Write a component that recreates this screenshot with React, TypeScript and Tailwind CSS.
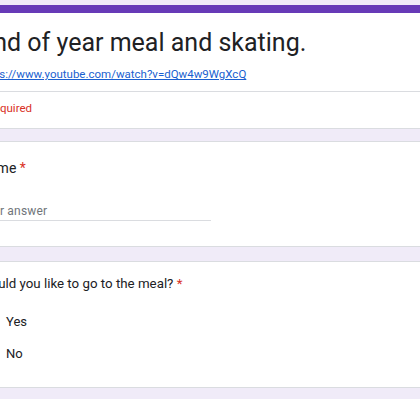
import React from 'react';

const font = { fontFamily: 'Roboto, "Noto Sans", Arial, sans-serif' };

function Required() {
  return <span className="text-[#d93025]"> *</span>;
}

export default function App() {
  return (
    <div className="w-[420px] h-[420px] overflow-hidden bg-[#f0ebf8]" style={font}>
      <div className="ml-[-46px] w-[520px] pt-[5px] flex flex-col">
        {/* header card */}
        <div className="rounded-lg overflow-hidden border border-[#dadce0] border-t-0 bg-white">
          <div className="h-[8px] bg-[#673ab7]" />
          <div className="px-6 pt-[12px] pb-[9px]">
            <div className="text-[25px] leading-[36px] text-[#202124]">End of year meal and skating.</div>
            <a className="block mt-[5px] text-[11.5px] leading-[16px] text-[#1a5fd0] underline">
              https://www.youtube.com/watch?v=dQw4w9WgXcQ
            </a>
          </div>
          <div className="border-t border-[#dadce0] px-6 pt-[8px] pb-[12px]">
            <div className="text-[11.5px] leading-[16px] text-[#d93025]">* Required</div>
          </div>
        </div>

        {/* name */}
        <div className="mt-[12px] rounded-lg border border-[#dadce0] bg-white px-6 pt-[16px] pb-[25px]">
          <div className="text-[14px] leading-[20px] text-[#202124]">
            Name<Required />
          </div>
          <div className="mt-[25px] w-[232px] border-b border-[#dadce0] pb-[1px] text-[12px] leading-[16px] text-[#70757a] tracking-[0.2px]">
            Your answer
          </div>
        </div>

        {/* meal */}
        <div className="mt-[14px] rounded-lg border border-[#dadce0] bg-white px-6 pt-[12px] pb-[23px]">
          <div className="text-[13.3px] leading-[20px] text-[#202124]">
            Would you like to go to the meal?<Required />
          </div>
          <div className="mt-[18px] flex flex-col gap-[12px]">
            {['Yes', 'No'].map((opt) => (
              <div key={opt} className="flex items-center gap-[7px] text-[13px] leading-[20px] text-[#202124]">
                <span className="w-5 h-5 rounded-full border-2 border-[#5f6368]" />
                {opt}
              </div>
            ))}
          </div>
        </div>

        <div className="mt-[11px] h-[40px] bg-white" />
      </div>
    </div>
  );
}
